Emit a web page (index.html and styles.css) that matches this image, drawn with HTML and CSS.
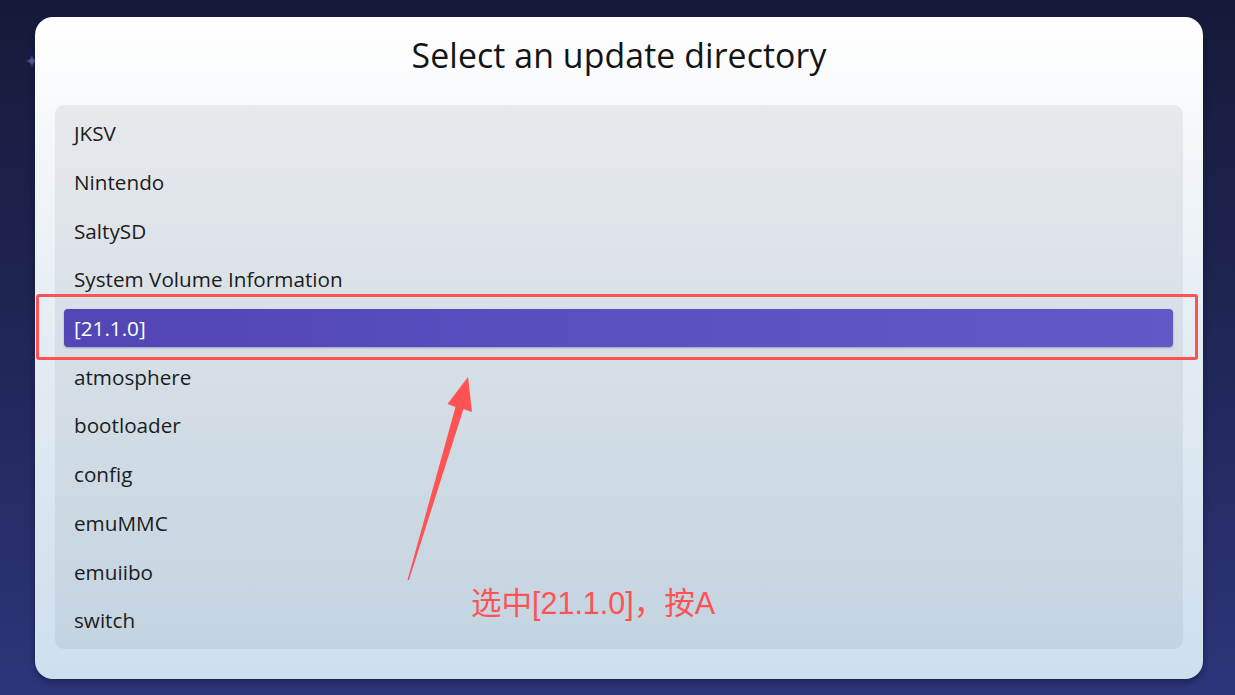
FILE: index.html
```html
<!DOCTYPE html>
<html lang="en">
<head>
<meta charset="utf-8">
<title>Select an update directory</title>
<link rel="stylesheet" href="styles.css">
</head>
<body>
<div class="screen">
  <div class="spark"></div>
  <div class="panel">
    <h1 class="title">Select an update directory</h1>
    <ul class="list">
      <li class="row"><span class="item">JKSV</span></li>
      <li class="row"><span class="item">Nintendo</span></li>
      <li class="row"><span class="item">SaltySD</span></li>
      <li class="row"><span class="item">System Volume Information</span></li>
      <li class="row"><span class="item selected">[21.1.0]</span></li>
      <li class="row"><span class="item">atmosphere</span></li>
      <li class="row"><span class="item">bootloader</span></li>
      <li class="row"><span class="item">config</span></li>
      <li class="row"><span class="item">emuMMC</span></li>
      <li class="row"><span class="item">emuiibo</span></li>
      <li class="row"><span class="item">switch</span></li>
    </ul>
  </div>
  <div class="mark-box"></div>
  <svg class="mark-arrow" width="1235" height="695" viewBox="0 0 1235 695">
    <polygon points="407.5,580 455.5,407 447.5,404 468,377 472,412 463.5,409 409,580" fill="#ff5252"/>
  </svg>
  <div class="mark-text">选中[21.1.0]，按A</div>
</div>
</body>
</html>
```
FILE: styles.css
```css
html, body {
  margin: 0;
  padding: 0;
}
body {
  width: 1235px;
  height: 695px;
  overflow: hidden;
  background: linear-gradient(180deg, #161a39 0%, #1f2553 45%, #2d357b 100%);
  font-family: "Open Sans", "Noto Sans", sans-serif;
}
.screen {
  position: relative;
  width: 1235px;
  height: 695px;
  padding: 17px 32px 0 35px;
  box-sizing: border-box;
}
.spark {
  position: absolute;
  left: 24px;
  top: 53px;
  width: 16px;
  height: 16px;
  background: radial-gradient(circle, rgba(120,125,190,0.85) 0%, rgba(80,85,150,0.4) 40%, rgba(0,0,0,0) 70%);
  clip-path: polygon(50% 0, 62% 38%, 100% 50%, 62% 62%, 50% 100%, 38% 62%, 0 50%, 38% 38%);
}
.panel {
  position: relative;
  width: 1168px;
  height: 662px;
  border-radius: 18px;
  background: linear-gradient(180deg, #ffffff 0%, #f3f6f9 20%, #dfe9f1 60%, #cddfed 100%);
  box-shadow: 0 3px 6px rgba(10, 14, 40, 0.45);
  display: flex;
  flex-direction: column;
  box-sizing: border-box;
  padding: 0 20px 30px 20px;
}
.title {
  margin: 0;
  height: 88px;
  display: flex;
  align-items: center;
  justify-content: center;
  padding-bottom: 12px;
  box-sizing: border-box;
  font-family: "Open Sans", "Noto Sans", sans-serif;
  font-weight: 400;
  font-size: 33.8px;
  color: #141414;
  letter-spacing: 0.1px;
}
.list {
  list-style: none;
  margin: 0;
  padding: 4px 0 0 0;
  flex: 1;
  border-radius: 9px;
  background: linear-gradient(180deg, #e7e9ec 0%, #d6dfe6 45%, #c3d4e1 100%);
}
.row {
  height: 48.7px;
  display: flex;
  align-items: center;
}
.item {
  flex: 1;
  margin: 0 10px 0 9px;
  height: 38px;
  display: flex;
  align-items: center;
  padding-left: 10px;
  font-size: 20.7px;
  color: #1c1c1c;
  border-radius: 4px;
}
.item.selected {
  background: linear-gradient(90deg, #5245b6 0%, #5a50c0 50%, #6258c6 100%);
  color: #ffffff;
  box-shadow: 0 1px 2px rgba(40, 30, 110, 0.35);
}
.mark-box {
  position: absolute;
  left: 36px;
  top: 294px;
  width: 1162px;
  height: 66px;
  border: 3px solid #ff5353;
  border-radius: 3px;
  box-sizing: border-box;
}
.mark-arrow {
  position: absolute;
  left: 0;
  top: 0;
}
.mark-text {
  position: absolute;
  left: 471px;
  top: 583px;
  font-family: "Liberation Sans", "Noto Sans CJK SC", sans-serif;
  font-size: 30.5px;
  line-height: 40px;
  color: #ff5353;
}
```
